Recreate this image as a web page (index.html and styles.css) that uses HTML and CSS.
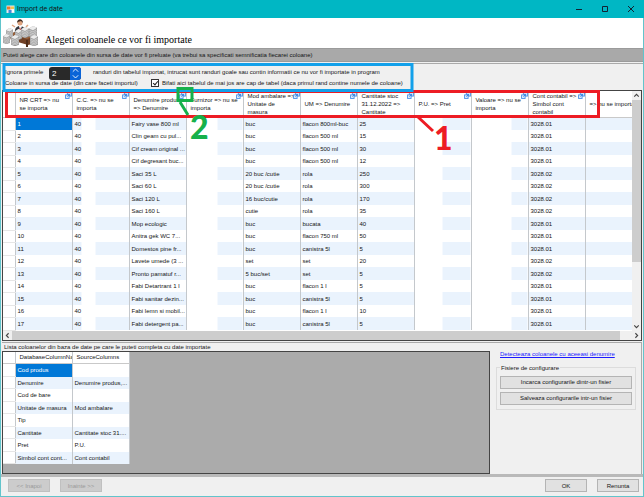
FILE: index.html
```html
<!DOCTYPE html>
<html lang="ro">
<head>
<meta charset="utf-8">
<title>Import de date</title>
<link rel="stylesheet" href="styles.css">
</head>
<body>
<svg class="defs" aria-hidden="true">
  <symbol id="link" viewBox="0 0 12 12"><g fill="#e3f0fd" stroke="#4a90e8" stroke-width="1.6"><rect x="4" y="1" width="7" height="6"/><rect x="1" y="5" width="6" height="6"/></g><path d="M4 8 8 4M5 4h3v3" fill="none" stroke="#2f7fe0" stroke-width="1.4"/></symbol>
  <symbol id="stack" viewBox="0 0 10 14" preserveAspectRatio="none"><path d="M0 3 5 0l5 2v10l-5 2-5-2z" fill="#a5a5a5"/><path d="M0 3 5 0l5 2-5 3z" fill="#ececec"/><path d="m0 5 5 2 5-3M0 7l5 2 5-3M0 9l5 2 5-3M0 11l5 2 5-3" fill="none" stroke="#dedede" stroke-width=".8"/><path d="M0 3v9l5 2 5-2V2" fill="none" stroke="#777" stroke-width=".5"/></symbol>
</svg>
<header class="titlebar">
  <svg class="app" viewBox="0 0 18 18" aria-hidden="true"><path fill="#e9e9e9" d="M1 1h16v15H1z"/><path fill="#eb7a2d" d="M2 3h7v6H2z"/><path fill="#f5c64b" d="M10 3h6v5h-6z"/><path fill="#4b86d9" d="M5 10h6v6H5z"/><path fill="#fff" d="M12 9h4v5h-4z"/></svg>
  <span class="name">Import de date</span>
  <button aria-label="Minimizare"><svg viewBox="0 0 8 8"><path d="M1 4.500h6"/></svg></button>
  <button aria-label="Maximizare"><svg viewBox="0 0 8 8"><path d="M1.500 1.500h5v5h-5z"/></svg></button>
  <button aria-label="Inchidere"><svg viewBox="0 0 8 8"><path d="m1 1 6 6M7 1 1 7"/></svg></button>
</header>
<main>
  <div class="heading">
    <svg viewBox="0 0 36 28" aria-hidden="true">
      <path d="M6 15 16 12l17 5v7l-8 2-17-5z" fill="#704126"/><path d="m6 15 10-3 17 5-9 3z" fill="#9a623a"/><path d="M12 20v7M24 21v7" stroke="#4e2c19" stroke-width="2"/>
      <path d="M12 15c-1-6 2-8 5-8s6 2 5 8z" fill="#34383f"/><path d="m16 7 1 5 2-5z" fill="#fff"/><path d="m17 8-1 3 1 2 1-2z" fill="#c32828"/><circle cx="17" cy="4" r="2.500" fill="#dda37f"/><path d="M14 4c0-5 6-5 6 0l-2-2-3 1z" fill="#422d22"/>
      <path d="m12 8-3-2m14 2 2-2" stroke="#dda37f" stroke-width="1.500"/>
      <use href="#stack" x="3" y="9" width="7" height="10"/><use href="#stack" x="12" y="10" width="7" height="11"/><use href="#stack" x="18" y="8" width="8" height="11"/><use href="#stack" x="26" y="7" width="8" height="12"/>
      <use href="#stack" x="0" y="15" width="7" height="10"/><use href="#stack" x="8" y="16" width="8" height="11"/><use href="#stack" x="27" y="16" width="8" height="11"/>
    </svg>
    <h1>Alegeti coloanele ce vor fi importate</h1>
  </div>
  <p class="info">Puteti alege care din coloanele din sursa de date vor fi preluate (va trebui sa specificati semnificatia fiecarei coloane)</p>
  <section class="source">
    <div class="options">
      <div class="line"><label for="skip">Ignora primele</label>
        <span class="spin"><input id="skip" type="text" value="2"><button aria-label="Modifica valoarea"><svg viewBox="0 0 10 12"><path d="m2 4 3-3 3 3M2 8l3 3 3-3"/></svg></button></span>
        <span>randuri din tabelul importat, intrucat sunt randuri goale sau contin informatii ce nu vor fi importate in program</span></div>
      <div class="line second"><span>Coloane in sursa de date (din care faceti importul)</span>
        <label class="check"><input type="checkbox" checked>Bifati aici tabelul de mai jos are cap de tabel (daca primul rand contine numele de coloane)</label></div>
    </div>
    <div class="grid">
      <div class="view">
        <table>
          <colgroup><col class="mark"><col class="std"><col class="std"><col class="std"><col class="std"><col class="std"><col class="std"><col class="std"><col class="std"><col class="std"><col class="std"><col></colgroup>
          <thead><tr id="heads"></tr></thead>
          <tbody id="rows"></tbody>
        </table>
        <div class="vbar"><svg viewBox="0 0 8 8"><path d="m2 5 2-2 2 2"/></svg><i></i><svg viewBox="0 0 8 8"><path d="m2 3 2 2 2-2"/></svg></div>
      </div>
      <div class="hbar"><svg viewBox="0 0 8 8"><path d="M5 2 3 4l2 2"/></svg><i></i><svg viewBox="0 0 8 8"><path d="m3 2 2 2-2 2"/></svg></div>
    </div>
  </section>
  <section class="target">
    <div class="columns">
      <h2>Lista coloanelor din baza de date pe care le puteti completa cu date importate</h2>
      <div class="well">
        <table class="small">
          <colgroup><col class="mark"><col class="std"><col class="std"></colgroup>
          <thead><tr><th></th><th>DatabaseColumnNa</th><th>SourceColumns</th></tr></thead>
          <tbody>
            <tr><td></td><td class="selected">Cod produs</td><td></td></tr>
            <tr><td></td><td>Denumire</td><td>Denumire produs,...</td></tr>
            <tr><td></td><td>Cod de bare</td><td></td></tr>
            <tr><td></td><td>Unitate de masura</td><td>Mod ambalare</td></tr>
            <tr><td></td><td>Tip</td><td></td></tr>
            <tr><td></td><td>Cantitate</td><td>Cantitate stoc 31....</td></tr>
            <tr><td></td><td>Pret</td><td>P.U.</td></tr>
            <tr><td></td><td>Simbol cont cont...</td><td>Cont contabil</td></tr>
          </tbody>
        </table>
      </div>
    </div>
    <aside>
      <a href="#">Detecteaza coloanele cu aceeasi denumire</a>
      <fieldset><legend>Fisiere de configurare</legend>
        <button>Incarca configurarile dintr-un fisier</button>
        <button>Salveaza configurarile intr-un fisier</button>
      </fieldset>
    </aside>
  </section>
  <footer>
    <button disabled>&lt;&lt; Inapoi</button><button disabled>Inainte &gt;&gt;</button>
    <button class="ok">OK</button><button>Renunta</button>
  </footer>
</main>
<svg class="notes" viewBox="0 0 644 497" aria-hidden="true">
  <g fill="none">
    <path d="M6.500 91.500h592v25h-592zM418 117l15 14" stroke="#ed1c24" stroke-width="3"/>
    <path d="M4 64.500h408v26H4z" stroke="#12a0ea" stroke-width="3"/>
    <path d="M178 88.500h14v12h-14zM180 102l8 13" stroke="#16b14b" stroke-width="3"/>
  </g>
  <text x="190" y="139" fill="#16b14b">2</text>
  <text x="434" y="150" fill="#ed1c24">1</text>
</svg>
<script src="grid.js"></script>
</body>
</html>
```
FILE: styles.css
```css
* { box-sizing: border-box; }
body { margin: 0; height: 100vh; display: flex; flex-direction: column; position: relative; overflow: hidden; background: #f0f0f0; font: 6px/8px "Liberation Sans", Arial, sans-serif; color: #151515; }
.defs { position: absolute; width: 0; height: 0; }
h1, h2, p { margin: 0; font-weight: normal; }
button, input { font: inherit; color: inherit; margin: 0; }
button { padding: 0; background: #e1e1e1; border: 1px solid #b4b4b4; }

.titlebar { flex: none; height: 18px; background: #00b7c4; display: flex; align-items: center; padding-left: 5px; border-left: 1px solid #287f87; }
.app { width: 9px; height: 9px; margin-right: 2px; }
.name { flex: 1; font: 7px/9px Roboto, sans-serif; }
.titlebar button { width: 26px; height: 18px; border: 0; background: none; }
.titlebar button svg { width: 8px; height: 8px; display: block; margin: auto; fill: none; stroke: #123; stroke-width: 1; }

main { flex: 1; min-height: 0; display: flex; flex-direction: column; border: solid #62c4cb; border-width: 0 1px 1px; }
.heading { flex: none; height: 30px; background: #fff; display: flex; padding: 1px 2px 0; }
.heading svg { width: 36px; height: 28px; }
h1 { font: 10px/14px "Liberation Serif", serif; margin: 14px 0 0 6px; color: #000; }
.info { flex: none; height: 14px; line-height: 12px; padding-left: 2px; background: #a9a9a9; border: solid #9b9b9b; border-width: 1px 0; }

.source { flex: none; display: flex; flex-direction: column; margin-top: 1px; border-top: 1px solid #aaa; }
.options { padding: 3px 0 0 4px; height: 26px; margin-right: 2px; }
.line { display: flex; align-items: center; height: 10px; }
.line.second { height: 12px; }
.line > label:first-child { width: 44px; }
.spin { display: flex; width: 32px; height: 13px; margin: 0 12px 0 0; border-radius: 3px; overflow: hidden; background: #292929; flex: none; align-self: flex-start; }
.spin input { width: 21px; padding: 0 3px; border: 0; background: none; color: #fff; font-size: 8px; }
.spin button { width: 11px; border: 0; background: #0a64d8; }
.spin svg { display: block; width: 9px; height: 11px; margin: auto; fill: none; stroke: #fff; stroke-width: 1; }
.second > span { width: 146px; }
.check { display: flex; align-items: center; gap: 3px; }
.check input { appearance: none; width: 8px; height: 8px; border: 1px solid #333; background: #fff; position: relative; }
.check input::after { content: ""; position: absolute; left: 2px; top: 0; width: 2px; height: 4px; border: solid #222; border-width: 0 1px 1px 0; transform: rotate(40deg); }

.grid { margin: 0 1px 0 1px; border: 1px solid #444; background: #fff; }
.view { display: flex; align-items: stretch; }
table { flex: 1; width: 100%; min-width: 0; table-layout: fixed; border-collapse: collapse; background: #fff; }
.mark { width: 12px; }
.std { width: 57px; }
th, td { padding: 0 2px; font-weight: normal; text-align: left; white-space: nowrap; overflow: hidden; border-right: 1px solid #c4c8cc; vertical-align: middle; line-height: 8px; }
thead th { height: 26px; padding: 1px 0 0 4px; white-space: normal; line-height: 8px; position: relative; border-bottom: 1px solid #c9c9c9; }
th svg { position: absolute; right: 0; top: 1px; width: 7px; height: 7px; }
thead th.last { white-space: nowrap; }
tbody tr { height: 12px; }
tbody tr:nth-child(odd) { height: 13px; background: #eaf3fd; }
tbody td:first-child { background: #fff; border-bottom: 1px solid #e6e6e6; }
td.last, th.last { border-right: 0; }
td.selected { background: #0078d7; color: #fff; }
td.cc { background: linear-gradient(90deg, #fff0 9px, #fff 9px 23px, #fff0 23px); }
td.furnizor { background: linear-gradient(90deg, #fff 31px, #fff0 31px); }
td.pu { background: linear-gradient(90deg, #fff 28px, #fff0 28px); }
td.valoare { background: linear-gradient(90deg, #fff 40px, #fff0 40px); }

.vbar { flex: none; width: 9px; background: #f0f0f0; display: flex; flex-direction: column; }
.vbar svg, .hbar svg { flex: none; width: 9px; height: 9px; fill: none; stroke: #444; stroke-width: 1; }
.vbar i { height: 162px; margin-bottom: auto; background: #cdcdcd; }
.hbar { display: flex; height: 9px; background: #f0f0f0; }
.hbar i { flex: 1; margin-right: 12px; background: #cdcdcd; }

.target { flex: 1; min-height: 0; display: flex; margin: 1px 1px 0; border: solid #aaa; border-width: 1px 1px 0 0; }
.columns { flex: 1; display: flex; flex-direction: column; }
h2 { font-size: 6px; line-height: 8px; padding-left: 2px; }
.well { flex: 1; background: #ababab; border: 1px solid #444; }
.small { width: 126px; flex: none; }
.small thead th { height: 12px; padding-top: 0; white-space: nowrap; }
.small tbody tr { height: 13px; background: #fff; }
.small tbody tr:nth-child(even) { height: 12px; background: #eaf3fd; }
aside { width: 151px; flex: none; padding: 7px 5px 0 6px; }
aside a { display: block; margin-left: 4px; color: #1a1aff; }
fieldset { margin: 6px 0 0; padding: 4px 3px 4px; border: 1px solid #dcdcdc; min-width: 0; display: flex; flex-direction: column; gap: 3px; }
legend { padding: 0 1px; }
fieldset button { width: 100%; height: 13px; line-height: 8px; }

footer { flex: none; display: flex; align-items: center; gap: 10px; height: 22px; padding: 0 4px 2px 7px; border-top: 3px solid #b9b9b9; }
footer button { width: 42px; height: 13px; line-height: 8px; }
footer button:disabled { background: #ccc; border-color: #c0c0c0; color: #999; }
footer .ok { margin-left: auto; }

.notes { position: absolute; left: 0; top: 0; width: 644px; height: 497px; pointer-events: none; }
.notes text { font: 900 32px Lato, "Open Sans", sans-serif; }
```
FILE: grid.js
```js
const heads = ["NR CRT => nu se&nbsp;importa", "C.C. => nu se importa", "Denumire produs => Denumire", "Furnizor => nu se importa", "Mod ambalare => Unitate de<br>masura", "UM => Denumire", "Cantitate stoc 31.12.2022 => Cantitate", "P.U. => Pret", "Valoare => nu se importa", "Cont contabil => Simbol cont contabil"];
const data = [
  ["Fairy vase 800 ml", "buc", "flacon 800ml-buc", "25", "3028.01"],
  ["Clin geam cu pul...", "buc", "flacon 500 ml", "15", "3028.01"],
  ["Cif cream original ...", "buc", "flacon 500 ml", "30", "3028.01"],
  ["Cif degresant buc...", "buc", "flacon 500 ml", "12", "3028.01"],
  ["Saci 35 L", "20 buc /cutie", "rola", "250", "3028.02"],
  ["Saci 60 L", "20 buc /cutie", "rola", "300", "3028.02"],
  ["Saci 120 L", "16 buc/cutie", "rola", "170", "3028.02"],
  ["Saci 160 L", "cutie", "rola", "35", "3028.02"],
  ["Mop ecologic", "buc", "bucata", "40", "3028.01"],
  ["Anitra gek WC 7...", "buc", "flacon 750 ml", "50", "3028.01"],
  ["Domestos pine fr...", "buc", "canistra 5l", "5", "3028.01"],
  ["Lavete umede (3 ...", "set", "set", "20", "3028.02"],
  ["Pronto pamatuf r...", "5 buc/set", "set", "5", "3028.02"],
  ["Fabi Detartrant 1 l", "buc", "flacon 1 l", "5", "3028.01"],
  ["Fabi sanitar dezin...", "buc", "canistra 5l", "5", "3028.01"],
  ["Fabi lemn si mobil...", "buc", "flacon 1 l", "10", "3028.01"],
  ["Fabi detergent pa...", "buc", "canistra 5l", "5", "3028.01"]
];
const cell = (text, cls = "") => `<td class="${cls}">${text}</td>`;
document.getElementById("heads").innerHTML = "<th></th>" +
  heads.map(h => `<th>${h}<svg aria-hidden="true"><use href="#link"/></svg></th>`).join("") + '<th class="last">=> nu se importa</th>';
document.getElementById("rows").innerHTML = data.map((r, i) => "<tr>" + cell("") +
  cell(i + 1, i ? "" : "selected") + cell("40", "cc") + cell(r[0]) + cell("", "furnizor") + cell(r[1]) + cell(r[2]) + cell(r[3]) +
  cell("", "pu") + cell("", "valoare") + cell(r[4]) + cell("", "last") + "</tr>").join("");
```
